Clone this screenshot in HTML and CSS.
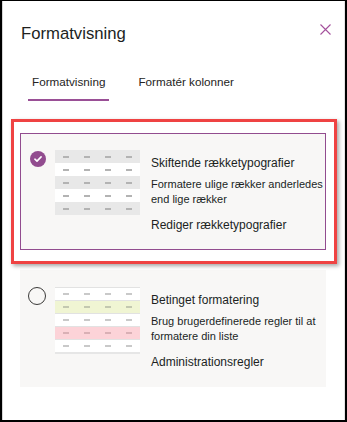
FILE: index.html
```html
<!DOCTYPE html>
<html lang="da">
<head>
<meta charset="utf-8">
<title>Formatvisning</title>
<link rel="stylesheet" href="styles.css">
</head>
<body>
<div class="panel">
  <div class="header">
    <h1 class="title">Formatvisning</h1>
    <svg class="close" width="11" height="11" viewBox="0 0 11 11"><path d="M0.5 0.5 L10.5 10.5 M10.5 0.5 L0.5 10.5" stroke="#a4509c" stroke-width="1.1" fill="none"/></svg>
  </div>
  <div class="tabs">
    <div class="tab active">Formatvisning</div>
    <div class="tab">Formatér kolonner</div>
  </div>
  <div class="cards">
    <div class="card selected">
      <svg class="check" width="16" height="16" viewBox="0 0 16 16"><circle cx="8" cy="8" r="8" fill="#924c8f"/><path d="M4.9 8.2 L7 10.1 L11.1 5.9" stroke="#fff" stroke-width="1.6" fill="none" stroke-linecap="round" stroke-linejoin="round"/></svg>
      <div class="thumb alt">
        <div class="row"><i></i><i></i><i></i><i></i></div>
        <div class="row"><i></i><i></i><i></i><i></i></div>
        <div class="row"><i></i><i></i><i></i><i></i></div>
        <div class="row"><i></i><i></i><i></i><i></i></div>
        <div class="row"><i></i><i></i><i></i><i></i></div>
      </div>
      <div class="text">
        <div class="ctitle">Skiftende rækketypografier</div>
        <div class="desc">Formatere ulige rækker anderledes end lige rækker</div>
        <div class="link">Rediger rækketypografier</div>
      </div>
    </div>
    <div class="card">
      <span class="radio"></span>
      <div class="thumb cond">
        <div class="row"><i></i><i></i><i></i><i></i></div>
        <div class="row green"><i></i><i></i><i></i><i></i></div>
        <div class="row"><i></i><i></i><i></i><i></i></div>
        <div class="row pink"><i></i><i></i><i></i><i></i></div>
        <div class="row"><i></i><i></i><i></i><i></i></div>
      </div>
      <div class="text">
        <div class="ctitle">Betinget formatering</div>
        <div class="desc">Brug brugerdefinerede regler til at formatere din liste</div>
        <div class="link">Administrationsregler</div>
      </div>
    </div>
  </div>
  <div class="annot"></div>
</div>
</body>
</html>
```
FILE: styles.css
```css
* { box-sizing: border-box; }
html, body { margin: 0; padding: 0; background: #fff; }
body { font-family: "Liberation Sans", Arial, sans-serif; color: #252423; }

.panel {
  position: relative;
  width: 347px;
  height: 422px;
  border-top: 1px solid #000;
  border-left: 2px solid #000;
  border-right: 2px solid #000;
  border-bottom: 2px solid #000;
  box-shadow: inset 1px 0 0 #d6d6d6, inset -1px 0 0 #e4e4e4;
  background: #fff;
  overflow: hidden;
}

.header {
  display: flex;
  justify-content: space-between;
  align-items: flex-start;
  padding: 22px 14px 0 19px;
}
.title {
  margin: 0;
  font-size: 16.7px;
  font-weight: normal;
  line-height: 22px;
  color: #201f1e;
}
.close { display: block; margin-top: 1px; }

.tabs {
  display: flex;
  gap: 25px;
  margin-top: 29px;
  padding-left: 26px;
}
.tab {
  font-size: 11.7px;
  line-height: 16px;
  padding: 0 4px 9px;
  border-bottom: 2px solid transparent;
  color: #252423;
}
.tab.active { border-bottom-color: #9a4f96; }

.cards {
  margin: 32px 0 0 18px;
  width: 306px;
  display: flex;
  flex-direction: column;
  gap: 20px;
}
.card {
  display: flex;
  align-items: flex-start;
  background: #f8f7f6;
  padding: 17px 0 17px 8px;
}
.card.selected {
  border: 1px solid #924c8f;
  padding: 16px 0 16px 9px;
}
.check { display: block; flex: none; margin-top: 1px; }
.radio {
  display: block;
  flex: none;
  width: 18px;
  height: 18px;
  border: 1px solid #3b3a39;
  border-radius: 50%;
}

.thumb {
  flex: none;
  width: 85px;
  margin-left: 9px;
}
.row {
  height: 13px;
  display: flex;
  align-items: center;
  gap: 15px;
  padding-left: 8px;
  background: #fff;
}
.row i {
  display: block;
  width: 6px;
  height: 2px;
  background: #b3b3b3;
}
.thumb.alt .row:nth-child(odd) { background: #e8e8e8; }
.thumb.cond { border-bottom: 2px solid #e6e6e6; }
.thumb.cond .row { border-top: 1px solid #e2e2e2; }
.thumb.cond .row i { background: #c9c9c9; }
.row.green { background: #f0f5d3; }
.row.pink { background: #fcd3d8; }
.thumb.cond .row.green i { background: #c3c8b0; }
.thumb.cond .row.pink i { background: #d9b0b5; }

.text {
  flex: 1;
  margin-left: 11px;
  min-width: 0;
}
.ctitle {
  margin-top: 6px;
  font-size: 12px;
  line-height: 15px;
  color: #201f1e;
}
.desc {
  margin-top: 6px;
  font-size: 11px;
  line-height: 15px;
  color: #201f1e;
}
.link {
  margin-top: 11px;
  font-size: 12px;
  line-height: 15px;
  color: #201f1e;
}

.annot {
  position: absolute;
  left: 9px;
  top: 118px;
  width: 326px;
  height: 145px;
  border: 3px solid #ef4343;
  box-shadow: 2px 2px 4px rgba(0, 0, 0, 0.35);
  pointer-events: none;
}
```
